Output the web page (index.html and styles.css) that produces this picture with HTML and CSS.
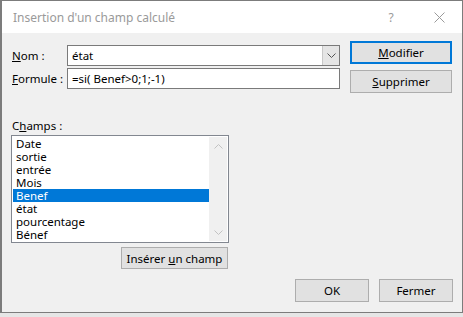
FILE: index.html
```html
<!DOCTYPE html>
<html lang="fr">

<head>
    <meta charset="UTF-8">
    <meta name="viewport" content="width=device-width, initial-scale=1.0">
    <title>Insertion d'un champ calculé</title>
    <link rel="stylesheet" href="styles.css">
</head>

<body>
    <div class="window">

        <!-- Title bar -->
        <div class="titlebar">
            <span class="title">Insertion d'un champ calculé</span>
            <span class="help">?</span>
            <span class="close">
                <svg width="11" height="11" viewBox="0 0 11 11">
                    <path d="M0.5 0.5 L10.5 10.5 M10.5 0.5 L0.5 10.5" stroke="#9a9a9a" stroke-width="1" fill="none" />
                </svg>
            </span>
        </div>

        <div class="content">
            <div class="top">
                <div class="fields">
                    <div class="row">
                        <label class="lbl"><u>N</u>om :</label>
                        <div class="combo">
                            <span class="combo-text">état</span>
                            <span class="drop">
                                <svg width="9" height="5" viewBox="0 0 9 5">
                                    <path d="M0.5 0.5 L4.5 4.5 L8.5 0.5" stroke="#555" stroke-width="1" fill="none" />
                                </svg>
                            </span>
                        </div>
                    </div>
                    <div class="row">
                        <label class="lbl"><u>F</u>ormule :</label>
                        <div class="input">=si( Benef&gt;0;1;-1)</div>
                    </div>
                </div>
                <div class="side">
                    <button class="btn default"><u>M</u>odifier</button>
                    <button class="btn"><u>S</u>upprimer</button>
                </div>
            </div>

            <div class="champs-label">C<u>h</u>amps :</div>
            <div class="listbox">
                <ul class="items">
                    <li>Date</li>
                    <li>sortie</li>
                    <li>entrée</li>
                    <li>Mois</li>
                    <li class="selected">Benef</li>
                    <li>état</li>
                    <li>pourcentage</li>
                    <li>Bénef</li>
                </ul>
                <div class="scroll">
                    <svg width="9" height="5" viewBox="0 0 9 5">
                        <path d="M0.5 4.5 L4.5 0.5 L8.5 4.5" stroke="#c2c2c2" stroke-width="1" fill="none" />
                    </svg>
                    <svg width="9" height="5" viewBox="0 0 9 5">
                        <path d="M0.5 0.5 L4.5 4.5 L8.5 0.5" stroke="#c2c2c2" stroke-width="1" fill="none" />
                    </svg>
                </div>
            </div>
            <button class="btn insert">Insérer <u>u</u>n champ</button>

            <div class="footer">
                <button class="btn small">OK</button>
                <button class="btn small">Fermer</button>
            </div>
        </div>
    </div>
</body>

</html>
```

FILE: styles.css
```css
* {
    box-sizing: border-box;
}

body {
    margin: 0;
    background-color: #e6e6e6;
    font-family: "Noto Sans", "Open Sans", sans-serif;
    font-size: 11.5px;
    color: #000;
}

.window {
    width: 463px;
    height: 313px;
    border: 1px solid #7c7c7c;
    border-left-width: 2px;
    background-color: #f0f0f0;
    display: flex;
    flex-direction: column;
}

.titlebar {
    height: 32px;
    background-color: #fff;
    display: flex;
    align-items: center;
    padding-left: 11px;
    color: #9a9a9a;
    font-size: 12px;
}

.titlebar .title {
    flex: 1;
}

.titlebar .help {
    width: 46px;
    text-align: center;
    margin-right: 2px;
}

.titlebar .close {
    width: 46px;
    display: flex;
    justify-content: center;
}

.content {
    padding: 0 9px 0 10px;
}

.top {
    display: flex;
    gap: 10px;
}

.fields {
    margin-top: 12px;
    display: flex;
    flex-direction: column;
    gap: 2px;
}

.row {
    display: flex;
    align-items: center;
}

.lbl {
    width: 55px;
}

.combo,
.input {
    width: 273px;
    height: 21px;
    background-color: #fff;
    border: 1px solid #7a7a7a;
    display: flex;
    align-items: center;
}

.combo-text,
.input {
    padding-left: 4px;
}

.combo-text {
    flex: 1;
}

.drop {
    width: 17px;
    height: 100%;
    background-color: #e5e5e5;
    border-left: 1px solid #c8c8c8;
    display: flex;
    align-items: center;
    justify-content: center;
}

.side {
    margin-top: 8px;
    display: flex;
    flex-direction: column;
    gap: 6px;
}

.btn {
    font-family: inherit;
    font-size: 11.5px;
    color: #000;
    background-color: #e1e1e1;
    border: 1px solid #adadad;
    height: 23px;
    padding: 0;
}

.side .btn {
    width: 102px;
}

.btn.default {
    border: 2px solid #0078d7;
}

.champs-label {
    margin-top: 25px;
    height: 15px;
    line-height: 15px;
}

.listbox {
    margin-top: 2px;
    margin-left: -1px;
    width: 218px;
    height: 108px;
    border: 1px solid #828790;
    background-color: #fff;
    padding: 1px;
    display: flex;
}

.items {
    list-style: none;
    margin: 0;
    padding: 0;
    flex: 1;
}

.items li {
    height: 13px;
    line-height: 13px;
    padding-left: 3px;
}

.items li.selected {
    background-color: #0078d7;
    color: #fff;
}

.scroll {
    width: 18px;
    background-color: #f0f0f0;
    display: flex;
    flex-direction: column;
    justify-content: space-between;
    align-items: center;
    padding: 7px 0 6px;
}

.insert {
    margin-top: 4px;
    margin-left: 109px;
    width: 107px;
    height: 22px;
}

.footer {
    margin-top: 10px;
    display: flex;
    justify-content: flex-end;
    gap: 10px;
}

.footer .small {
    width: 74px;
}
```
